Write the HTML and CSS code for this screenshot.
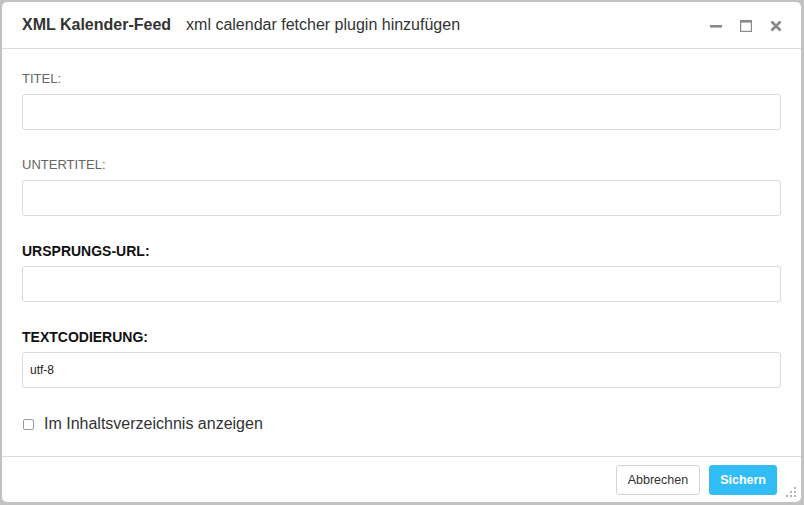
FILE: index.html
```html
<!DOCTYPE html>
<html>
<head>
<meta charset="utf-8">
<link rel="stylesheet" href="styles.css">
</head>
<body>
<div class="dialog">
  <div class="header">
    <span class="title">XML Kalender-Feed</span>
    <span class="subtitle">xml calendar fetcher plugin hinzufügen</span>
    <div class="controls">
      <svg class="ctl" width="12" height="12" viewBox="0 0 12 12"><rect x="0" y="5" width="12" height="2.6" fill="#8a8a8a"/></svg>
      <svg class="ctl" width="12" height="12" viewBox="0 0 12 12"><rect x="0.6" y="0.6" width="10.8" height="10.8" fill="none" stroke="#8a8a8a" stroke-width="1.2"/><rect x="0" y="0" width="12" height="2.6" fill="#8a8a8a"/></svg>
      <svg class="ctl" width="12" height="12" viewBox="0 0 12 12"><path d="M1.5 1.5 L10.5 10.5 M10.5 1.5 L1.5 10.5" stroke="#8a8a8a" stroke-width="2.8" stroke-linecap="butt"/></svg>
    </div>
  </div>
  <div class="form">
    <div class="group">
      <label class="lbl">Titel:</label>
      <div class="input"></div>
    </div>
    <div class="group">
      <label class="lbl">Untertitel:</label>
      <div class="input"></div>
    </div>
    <div class="group">
      <label class="lbl strong">Ursprungs-URL:</label>
      <div class="input"></div>
    </div>
    <div class="group">
      <label class="lbl strong">Textcodierung:</label>
      <div class="input">utf-8</div>
    </div>
    <div class="check">
      <span class="box"></span>
      <span>Im Inhaltsverzeichnis anzeigen</span>
    </div>
  </div>
  <div class="footer">
    <button class="btn">Abbrechen</button>
    <button class="btn primary">Sichern</button>
    <svg class="grip" width="10" height="10" viewBox="0 0 10 10">
      <rect x="8" y="0" width="2" height="2" fill="#b5b5b5"/>
      <rect x="4" y="4" width="2" height="2" fill="#b5b5b5"/>
      <rect x="8" y="4" width="2" height="2" fill="#b5b5b5"/>
      <rect x="0" y="8" width="2" height="2" fill="#b5b5b5"/>
      <rect x="4" y="8" width="2" height="2" fill="#b5b5b5"/>
      <rect x="8" y="8" width="2" height="2" fill="#b5b5b5"/>
    </svg>
  </div>
</div>
</body>
</html>
```
FILE: styles.css
```css
html, body {
  margin: 0;
  padding: 0;
}
body {
  background: #c2c2c2;
  width: 804px;
  height: 505px;
  padding: 2px 3px 3px 2px;
  box-sizing: border-box;
  font-family: "Liberation Sans", Arial, sans-serif;
  color: #333;
}
.dialog {
  background: #fff;
  width: 799px;
  height: 500px;
  border-radius: 5px;
  display: flex;
  flex-direction: column;
  position: relative;
}
.header {
  height: 46px;
  display: flex;
  align-items: center;
  padding: 0 20px;
  border-bottom: 1px solid #dcdcdc;
  flex-shrink: 0;
}
.title {
  font-weight: bold;
  font-size: 16px;
  color: #333;
  margin-right: 15px;
}
.subtitle {
  font-size: 16px;
  color: #333;
}
.controls {
  margin-left: auto;
  display: flex;
  gap: 18px;
  margin-right: -1px;
  padding-top: 1px;
}
.ctl {
  display: block;
}
.form {
  flex: 1;
  padding: 21px 20px 0 20px;
}
.group {
  margin-bottom: 26px;
}
.lbl {
  display: block;
  font-size: 13px;
  line-height: 18px;
  text-transform: uppercase;
  color: #666;
  margin-bottom: 6px;
}
.lbl.strong {
  font-weight: bold;
  font-size: 14px;
  color: #111;
}
.input {
  height: 36px;
  box-sizing: border-box;
  border: 1px solid #dadada;
  border-radius: 3px;
  font-size: 12px;
  line-height: 34px;
  padding: 0 7px;
  color: #222;
}
.check {
  display: flex;
  align-items: center;
  height: 20px;
  margin-top: 26px;
  font-size: 16px;
  color: #333;
  padding-left: 1px;
}
.box {
  width: 9px;
  height: 9px;
  border: 1px solid #999;
  border-radius: 2px;
  margin-right: 10px;
}
.footer {
  height: 46px;
  border-top: 1px solid #dcdcdc;
  display: flex;
  justify-content: flex-end;
  align-items: flex-start;
  padding: 8px 24px 0 0;
  box-sizing: border-box;
  gap: 9px;
  flex-shrink: 0;
}
.btn {
  height: 30px;
  font-family: "Liberation Sans", Arial, sans-serif;
  font-size: 12.5px;
  border: 1px solid #d4d4d4;
  background: #fff;
  border-radius: 3px;
  padding: 0 11px;
  color: #333;
}
.btn.primary {
  background: #33bdf6;
  border-color: #33bdf6;
  color: #fff;
  font-weight: bold;
  padding: 0 10px;
}
.grip {
  position: absolute;
  right: 5px;
  bottom: 5px;
}
```
